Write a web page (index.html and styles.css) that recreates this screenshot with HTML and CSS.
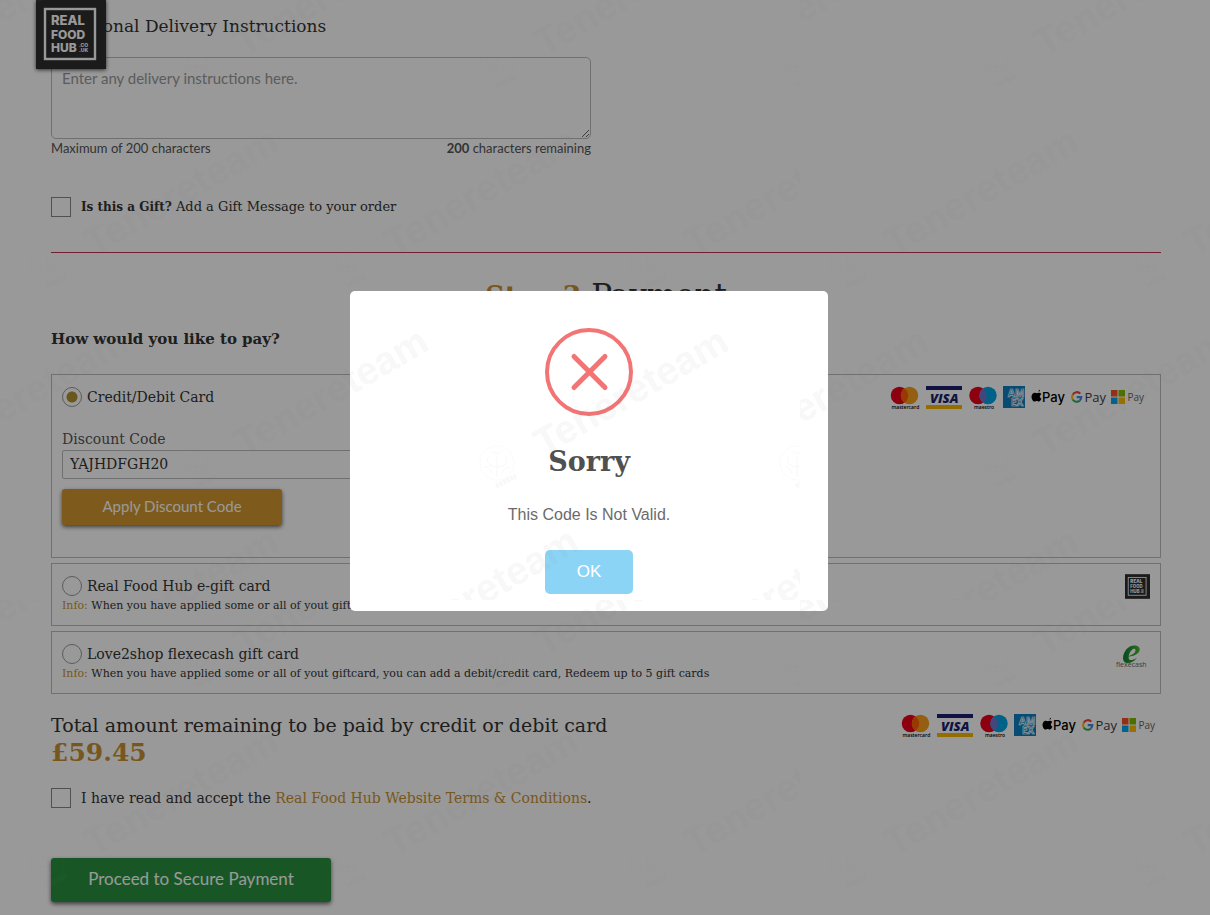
FILE: index.html
```html
<!DOCTYPE html>
<html lang="en">
<head>
<meta charset="utf-8">
<title>Checkout - Real Food Hub</title>
<link rel="stylesheet" href="styles.css">
</head>
<body>
<svg class="defs" aria-hidden="true">
  <symbol id="logo" viewBox="0 0 70 69">
    <rect width="70" height="69" fill="#2d2d2d"/>
    <rect x="9" y="9" width="50" height="50" fill="none" stroke="#fff" stroke-width="2.4"/>
    <g fill="#fff" font-family="Inter, sans-serif" font-weight="800">
      <text x="15" y="25" font-size="13">REAL</text>
      <text x="15" y="38.500" font-size="12">FOOD</text>
      <text x="15" y="52" font-size="12">HUB</text>
      <text x="43" y="47" font-size="5">.CO</text>
      <text x="43" y="52" font-size="5">.UK</text>
    </g>
  </symbol>
  <symbol id="payments" viewBox="0 0 256 26">
    <circle cx="9.500" cy="10.500" r="8.700" fill="#eb001b"/>
    <circle cx="19.500" cy="10.500" r="8.700" fill="#f79e1b"/>
    <path d="M14.500 3.400a8.700 8.700 0 0 1 0 14.200a8.700 8.700 0 0 1 0-14.200z" fill="#ff5f00"/>
    <text x="1.500" y="24" font-family="Open Sans, sans-serif" font-weight="600" font-size="5">mastercard</text>
    <rect x="36" y="1" width="36" height="4" fill="#1a1f71"/>
    <rect x="36" y="20" width="36" height="4" fill="#f7b600"/>
    <text x="40" y="17.500" font-family="Open Sans, sans-serif" font-weight="800" font-style="italic" font-size="13" fill="#1a1f71">VISA</text>
    <circle cx="88" cy="10.500" r="8.700" fill="#eb001b"/>
    <circle cx="98" cy="10.500" r="8.700" fill="#00a2e5"/>
    <path d="M93 3.400a8.700 8.700 0 0 1 0 14.200a8.700 8.700 0 0 1 0-14.200z" fill="#7375cf"/>
    <text x="84" y="24" font-family="Open Sans, sans-serif" font-weight="600" font-size="5">maestro</text>
    <rect x="113" y="1" width="22" height="22" fill="#0f7fc0"/>
    <g font-family="Open Sans, sans-serif" font-weight="700" font-size="10" fill="#0f7fc0" stroke="#fff" stroke-width=".7">
      <text x="118" y="11.500">AM</text>
      <text x="121" y="20.500">EX</text>
    </g>
    <path d="M148.600 6.800c.9-.2 1.500-1.100 1.400-2-.9.100-1.600 1-1.400 2zM150.300 10.800c0-1.200.9-1.800 1-1.900-.8-1-1.900-1.200-2.400-1.200-.9 0-1.500.5-2 .5s-1.200-.5-2-.5c-2 .1-3.400 1.700-3.400 4 0 2.200 1.600 4.900 3.100 4.900.7 0 1.200-.5 2.100-.5.900 0 1.200.5 2 .5 1.300 0 2.400-1.900 2.700-3-1-.4-1.600-1.400-1.600-2.800z"/>
    <text x="152" y="17" font-family="Inter, sans-serif" font-weight="500" font-size="13">Pay</text>
    <g fill="none" stroke-width="2.100">
      <path d="M190.300 8.600A4.700 4.700 0 0 0 182.700 9.700" stroke="#ea4335"/>
      <path d="M182.700 9.700A4.700 4.700 0 0 0 182.700 14.500" stroke="#fbbc04"/>
      <path d="M182.700 14.500A4.700 4.700 0 0 0 189.800 15.600" stroke="#34a853"/>
      <path d="M189.800 15.600A4.700 4.700 0 0 0 191.300 12.100H186.700" stroke="#4285f4"/>
    </g>
    <text x="194.500" y="17" font-family="Open Sans, sans-serif" font-size="13" fill="#3c4043">Pay</text>
    <path d="M221 5h6.500v6.500H221z" fill="#f25022"/>
    <path d="M228.500 5h6.500v6.500h-6.500z" fill="#7fba00"/>
    <path d="M221 12.500h6.500V19H221z" fill="#00a4ef"/>
    <path d="M228.500 12.500h6.500V19h-6.500z" fill="#ffb900"/>
    <text x="237.500" y="16" font-family="Open Sans, sans-serif" font-size="10" fill="#666">Pay</text>
  </symbol>
</svg>

<a class="brand" href="#" aria-label="Real Food Hub home"><svg class="brand-logo"><use href="#logo"/></svg></a>

<main class="page">
  <form class="checkout">
    <label class="section-label" for="instructions">Additional Delivery Instructions</label>
    <div class="instructions">
      <textarea class="notes" id="instructions" placeholder="Enter any delivery instructions here."></textarea>
      <div class="counter"><span>Maximum of 200 characters</span><span><strong>200</strong> characters remaining</span></div>
    </div>
    <label class="check gift"><input class="box" type="checkbox"><span><strong>Is this a Gift?</strong> Add a Gift Message to your order</span></label>

    <hr class="rule">
    <h2 class="step"><strong>Step 3</strong> Payment</h2>
    <h3 class="question">How would you like to pay?</h3>

    <div class="methods">
      <section class="method method-card">
        <div class="method-main">
          <label class="choice"><input class="dot" type="radio" name="pay" checked>Credit/Debit Card</label>
          <label class="code-label" for="code">Discount Code</label>
          <input class="code" id="code" type="text" value="YAJHDFGH20">
          <button class="btn btn-apply" type="button">Apply Discount Code</button>
        </div>
        <svg class="payments" role="img" aria-label="Accepted payment types"><use href="#payments"/></svg>
      </section>
      <section class="method">
        <div class="method-main">
          <label class="choice"><input class="dot" type="radio" name="pay">Real Food Hub e-gift card</label>
          <p class="info"><span class="gold">Info:</span> When you have applied some or all of yout giftcard, you can add a debit/credit card, Redeem up to 5 gift cards</p>
        </div>
        <svg class="mini-logo" role="img" aria-label="Real Food Hub"><use href="#logo"/></svg>
      </section>
      <section class="method">
        <div class="method-main">
          <label class="choice"><input class="dot" type="radio" name="pay">Love2shop flexecash gift card</label>
          <p class="info"><span class="gold">Info:</span> When you have applied some or all of yout giftcard, you can add a debit/credit card, Redeem up to 5 gift cards</p>
        </div>
        <svg class="flexecash" viewBox="0 0 34 26" role="img" aria-label="flexecash">
          <defs><linearGradient id="leaf" x1="0" y1="0" x2="1" y2="0"><stop offset="0" stop-color="#0a7a35"/><stop offset="1" stop-color="#4fb82c"/></linearGradient></defs>
          <path d="M10 12.500C15 12 19.500 9.500 19.500 6.300c0-1.600-1.300-2-2.500-1.200-2.700 1.600-4.600 6-4.300 9 .3 2.800 3.500 2.700 8.300-.4-2.600 3.700-6 5.300-8.900 5.300-3.500 0-5.200-2.300-5-5.600C7.400 7.700 12 1.500 18.300 1.500c3.400 0 5.600 1.600 5.400 4.200-.3 4-5.700 7-13.700 6.800z" fill="url(#leaf)"/>
          <text x="0" y="23" font-family="Open Sans, sans-serif" font-size="7" fill="#666">flexecash</text>
        </svg>
      </section>
    </div>

    <div class="total">
      <div>
        <p class="total-label">Total amount remaining to be paid by credit or debit card</p>
        <p class="price">£59.45</p>
      </div>
      <svg class="payments" role="img" aria-label="Accepted payment types"><use href="#payments"/></svg>
    </div>

    <label class="check terms"><input class="box" type="checkbox"><span>I have read and accept the <a class="gold" href="#">Real Food Hub Website Terms &amp; Conditions</a>.</span></label>
    <button class="btn btn-proceed" type="button">Proceed to Secure Payment</button>
  </form>
</main>

<div class="overlay">
  <div class="modal" role="alertdialog" aria-labelledby="alert-title" aria-describedby="alert-text">
    <svg class="error-icon" viewBox="0 0 88 88" fill="none" stroke="#f27474" aria-hidden="true">
      <circle cx="44" cy="44" r="42" stroke-width="4"/>
      <path d="M29 28.500l31 31M60 28.500l-31 31" stroke-width="5" stroke-linecap="round"/>
    </svg>
    <h2 class="modal-title" id="alert-title">Sorry</h2>
    <p class="modal-text" id="alert-text">This Code Is Not Valid.</p>
    <button class="modal-ok" type="button">OK</button>
  </div>
</div>

<svg class="watermark" aria-hidden="true">
  <defs>
    <g id="mark">
      <text transform="translate(47 -6) rotate(-30)">Tenereteam</text>
      <g fill="none" stroke="#666">
        <circle r="17" stroke-dasharray="2 1"/>
        <path d="M0 14V-6M0 4c-8 0-11-5-9-10M0 4c8 0 11-5 9-10M-5-12c3 3 7 3 10 0M-12 4c4 0 6 3 7 7M12 4c-4 0-6 3-7 7"/>
        <path d="M-1 23l20-10" stroke-width="5" stroke-dasharray="3 1"/>
      </g>
    </g>
    <pattern id="tile" width="800" height="600" patternUnits="userSpaceOnUse">
      <g class="mark-text">
        <use href="#mark" x="-103" y="63"/><use href="#mark" x="197" y="63"/><use href="#mark" x="497" y="63"/><use href="#mark" x="797" y="63"/>
        <use href="#mark" x="-253" y="263"/><use href="#mark" x="47" y="263"/><use href="#mark" x="347" y="263"/><use href="#mark" x="647" y="263"/>
        <use href="#mark" x="-103" y="463"/><use href="#mark" x="197" y="463"/><use href="#mark" x="497" y="463"/><use href="#mark" x="797" y="463"/>
        <use href="#mark" x="47" y="663"/><use href="#mark" x="347" y="663"/><use href="#mark" x="647" y="663"/>
      </g>
    </pattern>
  </defs>
  <rect width="100%" height="100%" fill="url(#tile)"/>
</svg>
</body>
</html>
```

FILE: styles.css
```css
* { box-sizing: border-box; }

body {
  margin: 0;
  background: #fff;
  color: #333;
  font-family: "DejaVu Serif", serif;
  font-size: 14px;
  line-height: 20px;
}

h2, h3, p { margin: 0; }

.defs { position: absolute; width: 0; height: 0; }
.gold { color: #c99232; text-decoration: none; }

.brand {
  position: fixed;
  top: 0;
  left: 36px;
  z-index: 1;
  box-shadow: 0 1px 4px rgba(0, 0, 0, .7);
}
.brand-logo { display: block; width: 70px; height: 69px; }

.page { padding: 14px 49px 13px 51px; }
.checkout { display: flex; flex-direction: column; align-items: stretch; }

.section-label { font-size: 17px; line-height: 24px; }
.instructions { width: 50%; max-width: 540px; margin-top: 19px; }
.notes {
  display: block;
  width: 100%;
  height: 82px;
  padding: 10px;
  border: 1px solid #bbb;
  border-radius: 5px;
  background: #fff;
  font: 15px/20px Lato, sans-serif;
}
.notes::placeholder { color: #999; }
.counter {
  display: flex;
  justify-content: space-between;
  font: 13px/18px Lato, sans-serif;
  color: #555;
}

.check { display: flex; align-items: center; gap: 10px; align-self: flex-start; }
.box {
  appearance: none;
  width: 20px;
  height: 20px;
  margin: 0;
  border: 1px solid #888;
  background: #fff;
}
.gift { margin-top: 40px; font-size: 13px; }
.gift strong { font-size: 12px; }

.rule { width: 100%; margin: 35px 0 22px; border: 0; border-top: 1px solid #c43355; }
.step { text-align: center; font-size: 31px; line-height: 40px; font-weight: 400; }
.step strong { font-size: 27px; color: #c99232; }
.question { margin-top: 10px; font-size: 15px; line-height: 24px; }

.methods { display: flex; flex-direction: column; gap: 5px; margin-top: 23px; }
.method {
  display: flex;
  justify-content: space-between;
  align-items: flex-start;
  padding: 12px 10px 9px;
  border: 1px solid #bbb;
}
.method-card { padding-bottom: 32px; }
.method-card .payments { margin: -2px 4px 0 0; }
.method-main { display: flex; flex-direction: column; align-items: flex-start; }
.choice { display: flex; align-items: center; gap: 5px; }
.dot {
  appearance: none;
  width: 20px;
  height: 20px;
  margin: 0;
  border: 1px solid #999;
  border-radius: 50%;
  background: #fff;
}
.dot:checked { background: radial-gradient(circle, #b09230 5px, #fff 6px); }
.code-label { margin-top: 22px; color: #555; }
.code {
  width: 540px;
  height: 29px;
  margin-top: 1px;
  padding: 0 7px 2px;
  border: 1px solid #bbb;
  border-radius: 2px;
  background: #fff;
  color: #333;
  font: 14px "DejaVu Serif", serif;
}
.btn {
  padding: 0 0 3px;
  border: 0;
  border-radius: 3px;
  box-shadow: 0 2px 4px rgba(0, 0, 0, .6);
  color: #fff;
  font-family: Lato, sans-serif;
}
.btn-apply { width: 220px; height: 36px; margin-top: 10px; background: #d2982f; font-size: 15px; }
.btn-proceed { width: 280px; height: 44px; margin-top: 50px; background: #28923e; font-size: 17px; }
.info { font-size: 11px; }

.payments { width: 256px; height: 26px; flex: none; }
.mini-logo { width: 25px; height: 25px; margin: -2px 0 0; }
.flexecash { width: 34px; height: 26px; }

.total { display: flex; justify-content: space-between; align-items: flex-start; margin-top: 17px; padding-right: 4px; }
.total .payments { margin-top: 2px; }
.total-label { font-size: 19px; line-height: 28px; }
.price { font-size: 25px; line-height: 28px; font-weight: 700; color: #c99232; }
.terms { margin-top: 21px; }

.overlay {
  position: fixed;
  inset: 0;
  z-index: 2;
  display: flex;
  align-items: center;
  justify-content: center;
  padding: 0 32px 13px 0;
  background: rgba(0, 0, 0, .4);
}
.modal {
  display: flex;
  flex-direction: column;
  align-items: center;
  width: 478px;
  padding: 37px 20px 17px;
  border-radius: 5px;
  background: #fff;
}
.error-icon { width: 88px; height: 88px; }
.modal-title { margin-top: 28px; font-size: 27px; line-height: 36px; color: #505050; }
.modal-text { margin-top: 25px; font: 16px/20px "Liberation Sans", sans-serif; color: #6b6b6b; }
.modal-ok {
  width: 88px;
  height: 44px;
  margin-top: 25px;
  border: 0;
  border-radius: 5px;
  background: #8cd4f5;
  color: #fff;
  font: 17px "Liberation Sans", sans-serif;
}

.watermark {
  position: fixed;
  inset: 0;
  z-index: 3;
  width: 100%;
  height: 100%;
  pointer-events: none;
}
.mark-text { opacity: .05; fill: #666; font: 700 39px "Liberation Sans", sans-serif; }
```
